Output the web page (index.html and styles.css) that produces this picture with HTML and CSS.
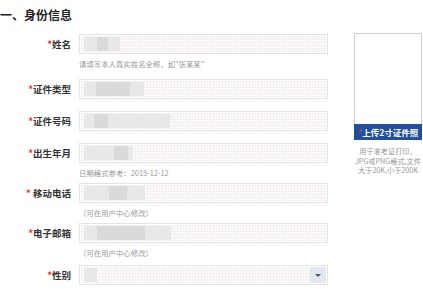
FILE: index.html
```html
<!DOCTYPE html>
<html lang="zh-CN">
<head>
  <meta charset="UTF-8">
  <meta name="viewport" content="width=device-width, initial-scale=1.0">
  <title>身份信息</title>
  <link rel="stylesheet" href="styles.css">
</head>
<body>
  <h2 class="section-title">一、身份信息</h2>
  <div class="content">
    <div class="form">
      <div class="field">
        <label class="label"><span class="star">*</span>姓名</label>
        <div class="input">
          <span class="blur" style="width: 36px"><span class="blur-dark" style="margin-left: 13px; width: 11px"></span></span>
        </div>
      </div>
      <div class="hint hint-first">请填写本人真实姓名全称，如"张某某"</div>

      <div class="field">
        <label class="label"><span class="star">*</span>证件类型</label>
        <div class="input">
          <span class="blur" style="width: 60px"><span class="blur-dark" style="margin-left: 12px; width: 34px"></span></span>
        </div>
      </div>

      <div class="field">
        <label class="label"><span class="star">*</span>证件号码</label>
        <div class="input">
          <span class="blur" style="width: 86px"><span class="blur-dark" style="margin-left: 10px; width: 14px"></span></span>
        </div>
      </div>

      <div class="field">
        <label class="label"><span class="star">*</span>出生年月</label>
        <div class="input">
          <span class="blur" style="width: 49px"><span class="blur-dark" style="margin-left: 30px; width: 14px"></span></span>
        </div>
      </div>
      <div class="hint">日期格式参考：2015-12-12</div>

      <div class="field">
        <label class="label"><span class="star">*</span> 移动电话</label>
        <div class="input">
          <span class="blur" style="width: 61px"><span class="blur-dark" style="margin-left: 25px; width: 18px"></span></span>
        </div>
      </div>
      <div class="hint">（可在用户中心修改）</div>

      <div class="field">
        <label class="label"><span class="star">*</span>电子邮箱</label>
        <div class="input">
          <span class="blur" style="width: 87px"><span class="blur-dark" style="margin-left: 13px; width: 48px"></span></span>
        </div>
      </div>
      <div class="hint hint-last">（可在用户中心修改）</div>

      <div class="field">
        <label class="label"><span class="star">*</span>性别</label>
        <div class="input select">
          <span class="blur" style="width: 13px"></span>
          <span class="select-arrow"></span>
        </div>
      </div>
    </div>

    <div class="photo">
      <div class="photo-frame"></div>
      <div class="photo-upload"><span class="star">*</span>上传2寸证件照</div>
      <div class="photo-note">用于准考证打印，<br>JPG或PNG格式,文件<br>大于20K,小于200K</div>
    </div>
  </div>
</body>
</html>
```

FILE: styles.css
```css
body {
  margin: 0;
  background: #fff;
  font-family: "Noto Sans CJK SC", "Noto Sans", sans-serif;
  color: #333;
}

.section-title {
  margin: 7px 0 11px 0;
  font-size: 12px;
  line-height: 16px;
  font-weight: bold;
  color: #222;
}

.content {
  display: flex;
  align-items: flex-start;
}

.form {
  width: 328px;
}

.field {
  display: flex;
  align-items: center;
  height: 20px;
  margin-bottom: 12px;
}

.label {
  width: 71px;
  margin-right: 8px;
  text-align: right;
  font-size: 9.5px;
  font-weight: bold;
  color: #333;
  white-space: pre;
}

.star {
  color: #e0342c;
}

.input {
  flex: 1;
  height: 20px;
  box-sizing: border-box;
  border: 1px solid #e6e3e3;
  box-shadow: inset 0 0 0 1px #fff;
  background-color: #faf7f7;
  background-image: radial-gradient(#ebe3e3 0.7px, transparent 0.8px);
  background-size: 3px 3px;
  display: flex;
  align-items: center;
  padding: 0 4px;
}

.blur {
  display: flex;
  height: 14px;
  background: #e8e8e8;
}

.blur-dark {
  height: 14px;
  background: #dadada;
}

.select {
  justify-content: space-between;
  padding-right: 1px;
}

.select-arrow {
  width: 16px;
  height: 16px;
  background: #e3e8ef;
  display: flex;
  align-items: center;
  justify-content: center;
}

.select-arrow::after {
  content: "";
  border-left: 3px solid transparent;
  border-right: 3px solid transparent;
  border-top: 3px solid #555;
}

.hint {
  margin: -9px 0 3px 79px;
  font-size: 7.4px;
  line-height: 14px;
  color: #999;
}

.hint-first {
  margin-bottom: 8px;
}

.hint-last {
  margin-bottom: 5px;
}

.photo {
  margin-left: 26px;
  width: 68px;
  margin-top: -1px;
}

.photo-frame {
  height: 90px;
  border: 1px solid #d0d0d0;
  border-bottom: none;
  background: #fff;
}

.photo-upload {
  height: 16px;
  line-height: 16px;
  background: #1f4f9e;
  color: #fff;
  font-size: 8.5px;
  font-weight: bold;
  text-align: center;
  white-space: nowrap;
}

.photo-note {
  margin-top: 7px;
  font-size: 7.2px;
  line-height: 9.5px;
  color: #999;
  text-align: center;
  white-space: nowrap;
}
```
